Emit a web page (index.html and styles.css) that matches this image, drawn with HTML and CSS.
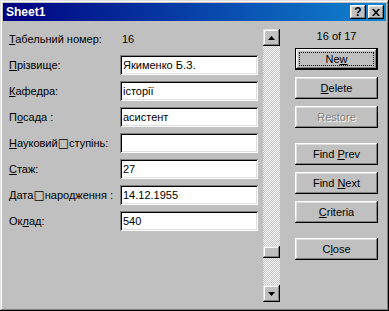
FILE: index.html
```html
<!DOCTYPE html>
<html>
<head>
<meta charset="utf-8">
<link rel="stylesheet" href="styles.css">
</head>
<body>
<div class="window">
	<div class="titlebar">
		<span class="title">Sheet1</span>
		<div class="caption-btns">
			<span class="cap help">?</span>
			<span class="cap close">
				<svg width="8" height="7" viewBox="0 0 8 7"><path d="M0 0h2l2 2.5L6 0h2L5 3.5 8 7H6L4 4.5 2 7H0l3-3.5z" fill="#000"/></svg>
			</span>
		</div>
	</div>

	<div class="content">
		<div class="fields">
			<div class="label"><u>Т</u>абельний номер:</div>
			<div class="value">16</div>

			<div class="label"><u>П</u>різвище:</div>
			<div class="input">Якименко Б.З.</div>

			<div class="label"><u>К</u>афедра:</div>
			<div class="input">історії</div>

			<div class="label">П<u>о</u>сада :</div>
			<div class="input">асистент</div>

			<div class="label"><u>Н</u>ауковий<span class="box">□</span>ступінь:</div>
			<div class="input"></div>

			<div class="label"><u>С</u>таж:</div>
			<div class="input">27</div>

			<div class="label"><u>Д</u>ата<span class="box">□</span>народження :</div>
			<div class="input">14.12.1955</div>

			<div class="label">Ок<u>л</u>ад:</div>
			<div class="input">540</div>
		</div>

		<div class="scrollbar">
			<div class="arrow">
				<svg width="7" height="4" viewBox="0 0 7 4"><path d="M3.5 0L7 4H0z" fill="#000"/></svg>
			</div>
			<div class="track">
				<div class="thumb"></div>
			</div>
			<div class="arrow">
				<svg width="7" height="4" viewBox="0 0 7 4"><path d="M0 0h7L3.5 4z" fill="#000"/></svg>
			</div>
		</div>

		<div class="actions">
			<div class="counter">16 of 17</div>
			<div class="btn default"><span class="focus">Ne<u>w</u></span></div>
			<div class="btn"><span><u>D</u>elete</span></div>
			<div class="btn disabled"><span>Restore</span></div>
			<div class="btn spaced"><span>Find <u>P</u>rev</span></div>
			<div class="btn"><span>Find <u>N</u>ext</span></div>
			<div class="btn"><span><u>C</u>riteria</span></div>
			<div class="btn spaced"><span>C<u>l</u>ose</span></div>
		</div>
	</div>
</div>
</body>
</html>
```

FILE: styles.css
```css
body {margin:0;
	background:#c0c0c0;
	font-family:"Liberation Sans", Arial, sans-serif;
	font-size:11px;
	color:#000;}

.window {width:389px;
	height:311px;
	box-sizing:border-box;
	padding:3px;
	background:#c0c0c0;
	box-shadow:inset -1px -1px #000, inset 1px 1px #dfdfdf,
		inset -2px -2px #808080, inset 2px 2px #fff;}

/* title bar */
.titlebar {height:18px;
	display:flex;
	align-items:center;
	justify-content:space-between;
	padding:0 2px 0 3px;
	background:linear-gradient(to right, #000080, #1084d0);}
.title {color:#fff;
	font-weight:bold;
	font-size:12px;}
.caption-btns {display:flex;
	gap:2px;}
.cap {width:16px;
	height:14px;
	box-sizing:border-box;
	display:flex;
	align-items:center;
	justify-content:center;
	background:#c0c0c0;
	box-shadow:inset -1px -1px #000, inset 1px 1px #fff,
		inset -2px -2px #808080, inset 2px 2px #dfdfdf;}
.help {font-weight:bold;
	font-size:12px;
	line-height:14px;
	padding-bottom:1px;}

/* body */
.content {display:flex;
	padding:8px 0 0 6px;}

.fields {display:grid;
	grid-template-columns:111px 138px;
	grid-auto-rows:20px;
	row-gap:6px;
	align-items:center;}
.value {padding-left:2px;}
.box {font-family:"DejaVu Sans", sans-serif;
	font-size:12px;}
.input {height:20px;
	box-sizing:border-box;
	padding:0 3px;
	line-height:20px;
	background:#fff;
	white-space:nowrap;
	box-shadow:inset 1px 1px #808080, inset -1px -1px #fff,
		inset 2px 2px #000, inset -2px -2px #dfdfdf;}

/* scrollbar */
.scrollbar {width:17px;
	height:273px;
	margin-left:5px;
	display:flex;
	flex-direction:column;}
.arrow {height:17px;
	flex:none;
	display:flex;
	align-items:center;
	justify-content:center;
	background:#c0c0c0;
	box-shadow:inset -1px -1px #000, inset 1px 1px #dfdfdf,
		inset -2px -2px #808080, inset 2px 2px #fff;}
.track {flex:1;
	padding-top:200px;
	background-color:#c0c0c0;
	background-image:conic-gradient(#fff 25%, #c0c0c0 0 50%, #fff 0 75%, #c0c0c0 0);
	background-size:2px 2px;}
.thumb {height:12px;
	background:#c0c0c0;
	box-shadow:inset -1px -1px #000, inset 1px 1px #dfdfdf,
		inset -2px -2px #808080, inset 2px 2px #fff;}

/* buttons */
.actions {width:83px;
	margin-left:15px;
	display:flex;
	flex-direction:column;
	gap:7px;}
.counter {height:15px;
	line-height:15px;
	text-align:center;
	margin-bottom:-3px;}
.btn {height:22px;
	box-sizing:border-box;
	display:flex;
	align-items:center;
	justify-content:center;
	background:#c0c0c0;
	box-shadow:inset -1px -1px #000, inset 1px 1px #fff,
		inset -2px -2px #808080, inset 2px 2px #dfdfdf;}
.btn.default {border:1px solid #000;}
.focus {align-self:stretch;
	flex:1;
	margin:3px;
	display:flex;
	align-items:center;
	justify-content:center;
	border:1px dotted #000;}
.btn.disabled {color:#808080;
	text-shadow:1px 1px #fff;}
.btn.spaced {margin-top:8px;}
```
